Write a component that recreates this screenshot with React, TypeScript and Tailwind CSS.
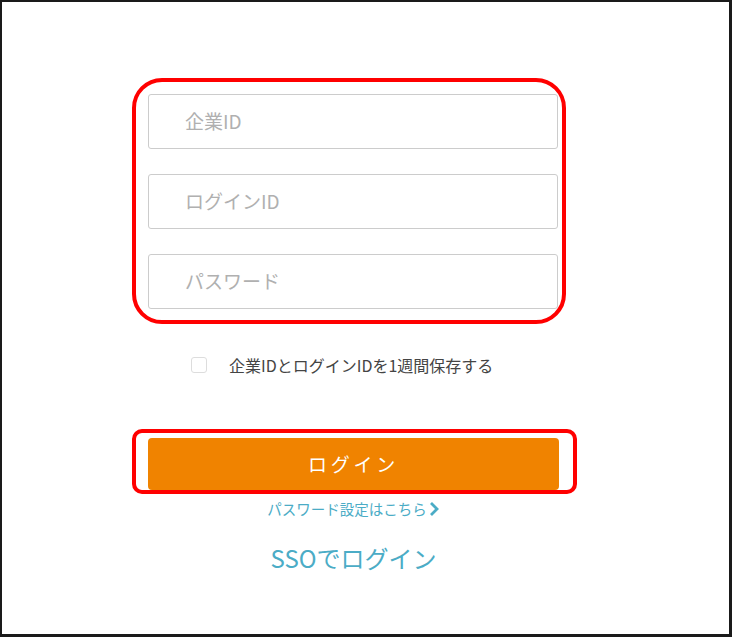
import React from "react";

export default function App() {
  const font = { fontFamily: '"Noto Sans CJK JP", "Noto Sans", sans-serif' };
  return (
    <div
      className="w-[732px] h-[637px] bg-white border-[#1a1a1a] border-t-2 border-l-2 border-r-[3px] border-b-[3px] box-border overflow-hidden"
      style={font}
    >
      <div className="ml-[130px] mt-[76px] w-[445px] flex flex-col">
        {/* inputs box */}
        <div className="w-[434px] h-[246px] border-4 border-[#ff0000] rounded-[30px] pl-[12px] pr-[4px] pt-[12px] flex flex-col gap-[25px]">
          {["企業ID", "ログインID", "パスワード"].map((p) => (
            <div
              key={p}
              className="h-[55px] w-[410px] border border-[#cccccc] rounded-[3px] flex items-center pl-[36px] text-[19px] text-[#b0b0b0]"
            >
              {p}
            </div>
          ))}
        </div>

        {/* checkbox row */}
        <div className="mt-[33px] ml-[59px] flex items-center h-[16px]">
          <div className="w-[16px] h-[16px] border border-[#dddddd] rounded-[3px] bg-white" />
          <span className="ml-[22px] text-[16px] leading-[16px] text-[#444444]">
            企業IDとログインIDを1週間保存する
          </span>
        </div>

        {/* login button box */}
        <div className="mt-[56px] w-[445px] h-[65px] border-4 border-[#ff0000] rounded-[10px] pl-[12px] pt-[5px]">
          <div className="w-[411px] h-[52px] bg-[#f08300] rounded-[4px] flex items-center justify-center text-white text-[19px] tracking-[0.2em]">
            ログイン
          </div>
        </div>

        {/* links */}
        <div className="ml-[16px] w-[411px] flex flex-col items-center">
          <div className="mt-[5px] h-[20px] flex items-center text-[14.5px] text-[#4bacc6]">
            <span>パスワード設定はこちら</span>
            <svg width="12" height="16" viewBox="0 0 12 16" className="ml-[1px]">
              <path d="M3 2 L9 8 L3 14" fill="none" stroke="#4bacc6" strokeWidth="2.8" />
            </svg>
          </div>
          <div className="mt-[23px] h-[32px] flex items-center text-[24px] text-[#4bacc6]">
            SSOでログイン
          </div>
        </div>
      </div>
    </div>
  );
}
